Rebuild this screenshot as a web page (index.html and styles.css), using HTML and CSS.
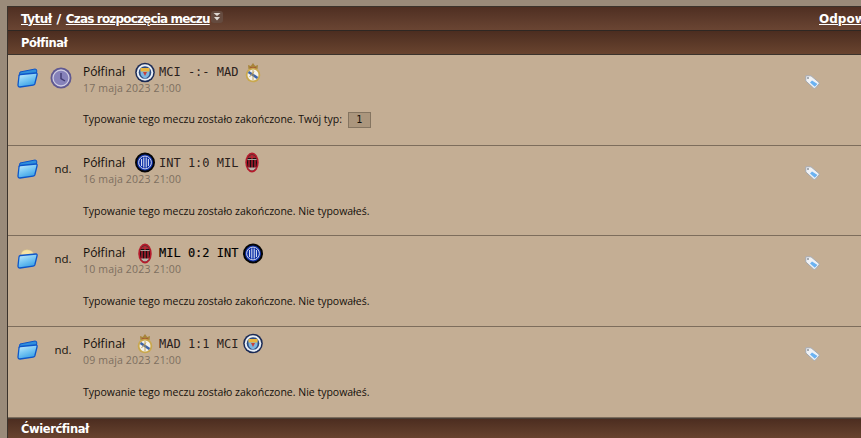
FILE: index.html
```html
<!DOCTYPE html>
<html lang="pl">
<head>
<meta charset="utf-8">
<title>Typowanie</title>
<link rel="stylesheet" href="styles.css">
</head>
<body>
<svg class="defs" width="0" height="0" aria-hidden="true">
  <defs>
    <linearGradient id="fb" x1="0" y1="0" x2=".5" y2="1"><stop offset="0" stop-color="#d4f1fb"/><stop offset=".5" stop-color="#7fcbf4"/><stop offset="1" stop-color="#3aa2e8"/></linearGradient>
    <clipPath id="milan-clip"><ellipse cx="7" cy="10.500" rx="5" ry="8"/></clipPath>
    <symbol id="folder" viewBox="0 0 21 20">
      <path d="M2 8 L3 4 L13 2 L18 1 Q20 1 19.800 3 L19 8 Z" fill="#2f8fdc" stroke="#0d55c8"/>
      <path d="M3.500 6.500 L19 5 Q20.500 5 20 7 L17.800 16 Q17.300 17 16 17.200 L3 19 Q1 19 1 17 L2 8 Q2 6.800 3.500 6.500 Z" fill="url(#fb)" stroke="#0d55c8" stroke-width="1.300"/>
    </symbol>
    <symbol id="folder-new" viewBox="0 0 21 20">
      <path d="M4 7 Q4 1 10 .8 Q16 1 17 6 Z" fill="#f6e3a4" stroke="#e0ca88" stroke-width=".5"/>
      <path d="M3.500 6.500 L19 5 Q20.500 5 20 7 L17.800 16 Q17.300 17 16 17.200 L3 19 Q1 19 1 17 L2 8 Q2 6.800 3.500 6.500 Z" fill="url(#fb)" stroke="#0d55c8" stroke-width="1.300"/>
    </symbol>
    <symbol id="mci" viewBox="0 0 20 20">
      <circle cx="10" cy="10" r="9.800" fill="#1a2a55"/>
      <circle cx="10" cy="10" r="8.300" fill="#e9eff5"/>
      <circle cx="10" cy="10" r="6.300" fill="#2b4a80"/>
      <path d="M5.500 5.500 H14.500 V10.500 Q14.500 14 10 16 Q5.500 14 5.500 10.500 Z" fill="#7db6e0"/>
      <path d="M5.500 5.500 H14.500 V9 H5.500 Z" fill="#eab53d"/>
      <path d="M8 9.500 H12 L10 13.500 Z" fill="#c7403a"/>
    </symbol>
    <symbol id="inter" viewBox="0 0 20 20">
      <circle cx="10" cy="10" r="9" fill="#0c2fa8" stroke="#050505" stroke-width="2"/>
      <circle cx="10" cy="10" r="6.400" fill="#0c2fa8" stroke="#e8e8f0" stroke-width=".9"/>
      <path d="M6.600 6.500 V13.500 M8.800 5 V15 M11.200 5 V15 M13.400 6.500 V13.500" stroke="#e4e8f5" stroke-width="1" fill="none"/>
    </symbol>
    <symbol id="milan" viewBox="0 0 14 21">
      <ellipse cx="7" cy="10.500" rx="6.700" ry="10" fill="#b51a2c"/>
      <ellipse cx="7" cy="10.500" rx="5" ry="8" fill="#141012"/>
      <g clip-path="url(#milan-clip)">
        <path d="M1 2 H13 V6 H1 Z" fill="#6a3a3c"/>
        <path d="M7 2.500 V7 M3 5 H11" stroke="#d4202f" stroke-width="1.200"/>
        <path d="M1 7 H13 V8 H1 Z" fill="#a8a09a"/>
        <path d="M4 8 V17 M7 8 V17 M10 8 V17" stroke="#c41f30" stroke-width="1.300" fill="none"/>
        <path d="M1 15.500 H13 V19 H1 Z" fill="#bdb4ac"/>
      </g>
    </symbol>
    <symbol id="real" viewBox="0 0 16 20">
      <path d="M3.500 6.500 L3 2.500 L5.800 3.500 L8 .5 L10.200 3.500 L13 2.500 L12.500 6.500 Z" fill="#a8843a"/>
      <path d="M5 5 H11 V6.500 H5 Z" fill="#a0392f"/>
      <circle cx="8" cy="12.500" r="7.300" fill="#c9a84e"/>
      <circle cx="8" cy="12.500" r="5.500" fill="#f4f2ea"/>
      <path d="M3.500 9.500 L12.500 15.500" stroke="#3d64a8" stroke-width="2.600"/>
      <path d="M8 7.500 V17.500 M4.500 14.500 L9 9" stroke="#b89a50" stroke-width=".9"/>
    </symbol>
    <symbol id="tag" viewBox="0 0 15 14">
      <path d="M.8 .8 H6 L14 7.500 Q14.500 8.300 14 9 L10.500 13 Q9.500 13.800 8.500 13 L.8 6 Z" fill="#f0f2f5" stroke="#a3a9b1"/>
      <path d="M7 5.500 L12.500 9 L9.800 11.800 L5 7.500 Z" fill="#6ab2f2"/>
      <circle cx="3" cy="3" r="1" fill="#8f959c"/>
    </symbol>
  </defs>
</svg>

<div class="board">
  <div class="head-bar">
    <div class="head-title">
      <a class="head-link" href="#">Tytuł</a><span class="slash">/</span><a class="head-link head-link-long" href="#">Czas rozpoczęcia meczu</a><span class="sort"><svg width="10" height="10" viewBox="0 0 10 10"><path d="M1.500 1 H8.500 L5 4 Z M2 5 H8 L5 8.500 Z" fill="#e0dad4"/></svg></span>
    </div>
    <a class="head-link head-right" href="#">Odpowiedzi</a>
  </div>
  <div class="cat-bar">Półfinał</div>

  <div class="match">
    <svg class="folder"><use href="#folder"/></svg>
    <div class="status">
      <svg class="clock" width="22" height="22" viewBox="0 0 22 22"><circle cx="11" cy="11" r="10.500" fill="#5f5892"/><circle cx="11" cy="11" r="8" fill="#8682ba" stroke="#cfcde2" stroke-width="1.300"/><path d="M11 6 V11.500 L15 14" fill="none" stroke="#3f3a70" stroke-width="1.400"/></svg>
    </div>
    <div class="main">
      <div class="title-line">
        <span class="title">Półfinał</span>
        <svg class="crest crest-round crest-a"><use href="#mci"/></svg>
        <span class="score">MCI -:- MAD</span>
        <svg class="crest crest-real crest-b"><use href="#real"/></svg>
      </div>
      <div class="date">17 maja 2023 21:00</div>
      <div class="note note-first">Typowanie tego meczu zostało zakończone. Twój typ: <span class="pick">1</span></div>
    </div>
    <svg class="tag"><use href="#tag"/></svg>
  </div>

  <div class="match">
    <svg class="folder"><use href="#folder"/></svg>
    <div class="status status-text">nd.</div>
    <div class="main">
      <div class="title-line">
        <span class="title">Półfinał</span>
        <svg class="crest crest-round crest-a"><use href="#inter"/></svg>
        <span class="score">INT 1:0 MIL</span>
        <svg class="crest crest-milan crest-b"><use href="#milan"/></svg>
      </div>
      <div class="date">16 maja 2023 21:00</div>
      <div class="note">Typowanie tego meczu zostało zakończone. Nie typowałeś.</div>
    </div>
    <svg class="tag"><use href="#tag"/></svg>
  </div>

  <div class="match">
    <svg class="folder"><use href="#folder-new"/></svg>
    <div class="status status-text">nd.</div>
    <div class="main">
      <div class="title-line">
        <span class="title">Półfinał</span>
        <svg class="crest crest-milan crest-a-narrow"><use href="#milan"/></svg>
        <span class="score score-bold">MIL 0:2 INT</span>
        <svg class="crest crest-round crest-b-round"><use href="#inter"/></svg>
      </div>
      <div class="date">10 maja 2023 21:00</div>
      <div class="note">Typowanie tego meczu zostało zakończone. Nie typowałeś.</div>
    </div>
    <svg class="tag"><use href="#tag"/></svg>
  </div>

  <div class="match">
    <svg class="folder"><use href="#folder"/></svg>
    <div class="status status-text">nd.</div>
    <div class="main">
      <div class="title-line">
        <span class="title">Półfinał</span>
        <svg class="crest crest-real crest-a-real"><use href="#real"/></svg>
        <span class="score">MAD 1:1 MCI</span>
        <svg class="crest crest-round crest-b-round"><use href="#mci"/></svg>
      </div>
      <div class="date">09 maja 2023 21:00</div>
      <div class="note">Typowanie tego meczu zostało zakończone. Nie typowałeś.</div>
    </div>
    <svg class="tag"><use href="#tag"/></svg>
  </div>

  <div class="cat-bar cat-last">Ćwierćfinał</div>
</div>
</body>
</html>
```

FILE: styles.css
```css
* { box-sizing: border-box; }
html, body { margin: 0; height: 100%; overflow: hidden; }
body {
  background: #9a8b7a;
  padding: 6px 0 0 7px;
  font-family: "Open Sans", "Noto Sans", sans-serif;
  color: #15100c;
}
.defs { position: absolute; }
.board {
  width: 854px;
  background: #c4ae94;
  border-left: 1px solid #3b332c;
  border-top: 1px solid #3b332c;
}
.head-bar {
  height: 24px;
  padding: 0 0 0 13px;
  display: flex;
  justify-content: space-between;
  align-items: center;
  background: linear-gradient(#4f2f22, #6a4533);
  border-bottom: 1px solid #2e2723;
  color: #fff;
  font: bold 12px/16px "DejaVu Sans", sans-serif;
  white-space: nowrap;
  overflow: hidden;
}
.head-title { display: flex; align-items: center; letter-spacing: -.55px; }
.head-link { color: #fff; text-decoration: underline; }
.head-link-long { letter-spacing: -.83px; }
.slash { margin: 0 5px; font-size: 13px; }
.head-right { margin-left: auto; flex: none; width: 42px; overflow: hidden; }
.sort {
  flex: none;
  width: 12px; height: 12px;
  padding: 1px;
  margin: -3px 0 0 1px;
  background: #654b3f;
  border-radius: 3px;
  line-height: 0;
}
.cat-bar {
  height: 24px;
  padding-left: 13px;
  display: flex;
  align-items: center;
  background: linear-gradient(#4c2d20, #69442f);
  border-bottom: 1px solid #3b332c;
  color: #fff;
  font: bold 11.500px/16px "DejaVu Sans", sans-serif;
  letter-spacing: -.42px;
}
.cat-last { border-bottom: 0; border-top: 1px solid #4a4038; height: 21px; }
.match {
  height: 90.670px;
  display: flex;
  align-items: flex-start;
  padding-left: 9px;
  border-bottom: 1px solid #7d6d5c;
}
.folder {
  flex: none;
  margin-top: 13px;
  width: 21px; height: 20px;
}
.status {
  flex: none;
  margin: 12px 11px 0 12px;
  width: 22px; height: 22px;
  display: flex;
  align-items: center;
  justify-content: center;
  font: 500 11.500px/16px "Open Sans", sans-serif;
  white-space: nowrap;
}
.status-text { padding-left: 4px; }
.clock { flex: none; }
.main { flex: none; width: 722px; padding-top: 8px; }
.title-line { height: 18px; display: flex; align-items: center; white-space: nowrap; }
.title { font-size: 12px; letter-spacing: .05px; line-height: 16px; width: 43px; flex: none; }
.score {
  font: 12px/16px "DejaVu Sans Mono", monospace;
  color: #2b211c;
  width: 80px;
  flex: none;
}
.score-bold { color: #000; -webkit-text-stroke: .15px #000; }
.crest { flex: none; display: block; height: 21px; }
.crest-round { width: 20px; }
.crest-milan { width: 14px; }
.crest-real { width: 16px; }
.crest-a { margin: 0 4px 0 9px; }
.crest-a-narrow { margin: 0 7px 0 12px; }
.crest-a-real { margin: 0 6px 0 11px; }
.crest-b { margin-left: 6px; }
.crest-b-round { margin-left: 4px; }
.date { font-size: 10.500px; letter-spacing: .17px; line-height: 14px; color: #7d6f60; }
.note { font-size: 10.500px; line-height: 16px; margin-top: 17px; }
.note-first { margin-top: 16px; }
.pick {
  display: inline-block;
  width: 23px; height: 16px;
  margin-left: 3px;
  text-align: center;
  background: #ab967d;
  border: 1px solid #857561;
  font: 10px/14px "DejaVu Sans Mono", monospace;
}
.tag {
  flex: none;
  margin-top: 20px;
  width: 15px; height: 14px;
}
```
